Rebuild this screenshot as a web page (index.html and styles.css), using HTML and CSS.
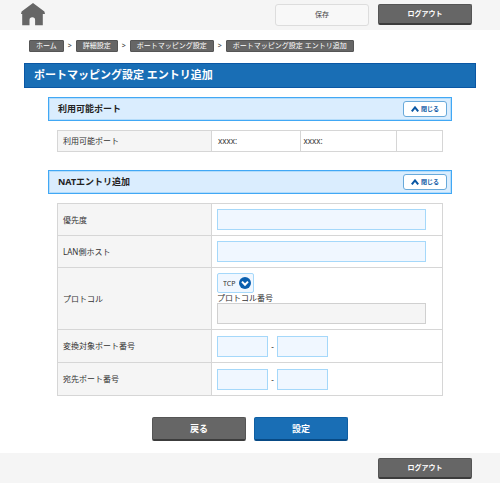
FILE: index.html
```html
<!DOCTYPE html>
<html lang="ja">
<head>
<meta charset="utf-8">
<meta name="viewport" content="width=device-width, initial-scale=1">
<title>ポートマッピング設定 エントリ追加</title>
<link rel="stylesheet" href="styles.css">
</head>
<body>
<header class="bar">
  <a class="home" href="#" aria-label="ホーム">
    <svg viewBox="0 0 24 24" width="24" height="24"><path d="M12 1 .6 9.4 0 12h1.2v11.3h7.3V18a2.8 2.8 0 0 1 5.6 0v5.3h7.7V12H24l-.6-2.6L12 1Z"/></svg>
  </a>
  <button class="btn save" type="button">保存</button>
  <button class="btn logout" type="button">ログアウト</button>
</header>

<nav class="crumbs">
  <a href="#">ホーム</a><span>&gt;</span>
  <a href="#">詳細設定</a><span>&gt;</span>
  <a href="#">ポートマッピング設定</a><span>&gt;</span>
  <a href="#">ポートマッピング設定 エントリ追加</a>
</nav>

<main>
  <h1>ポートマッピング設定 エントリ追加</h1>

  <section class="panel">
    <div class="panel-head">
      <h2>利用可能ポート</h2>
      <button class="toggle" type="button"><svg viewBox="0 0 8 6" width="8" height="6"><path d="M.8 5.4 4 1.4l3.2 4"/></svg>閉じる</button>
    </div>
    <table class="ports">
      <colgroup><col class="c-label"><col class="c-first"><col class="c-second"><col></colgroup>
      <tr><th scope="row">利用可能ポート</th><td>xxxx:</td><td>xxxx:</td><td></td></tr>
    </table>
  </section>

  <section class="panel">
    <div class="panel-head">
      <h2>NATエントリ追加</h2>
      <button class="toggle" type="button"><svg viewBox="0 0 8 6" width="8" height="6"><path d="M.8 5.4 4 1.4l3.2 4"/></svg>閉じる</button>
    </div>
    <form id="entry">
      <table class="fields">
        <colgroup><col class="c-label"><col></colgroup>
        <tr><th scope="row"><label for="priority">優先度</label></th><td><input id="priority" type="text"></td></tr>
        <tr><th scope="row"><label for="host">LAN側ホスト</label></th><td><input id="host" type="text"></td></tr>
        <tr>
          <th scope="row"><label for="protocol">プロトコル</label></th>
          <td>
            <div class="select">
              <select id="protocol"><option>TCP</option><option>UDP</option></select>
              <svg viewBox="0 0 12 12" width="12" height="12"><circle cx="6" cy="6" r="6"/><path d="M3 4.6 6 7.8l3-3.2"/></svg>
            </div>
            <label class="sub" for="number">プロトコル番号</label>
            <input id="number" type="text" disabled>
          </td>
        </tr>
        <tr><th scope="row"><label for="target">変換対象ポート番号</label></th><td class="range-cell"><div class="range"><input id="target" type="text"><span>-</span><input type="text" aria-label="変換対象ポート番号 終了"></div></td></tr>
        <tr><th scope="row"><label for="dest">宛先ポート番号</label></th><td class="range-cell"><div class="range"><input id="dest" type="text"><span>-</span><input type="text" aria-label="宛先ポート番号 終了"></div></td></tr>
      </table>
    </form>
  </section>

  <div class="actions">
    <button class="btn back" type="button">戻る</button>
    <button class="btn apply" type="submit" form="entry">設定</button>
  </div>
</main>

<footer class="bar">
  <button class="btn logout" type="button">ログアウト</button>
</footer>
</body>
</html>
```
FILE: styles.css
```css
* {
  box-sizing: border-box;
}

body {
  margin: 0;
  background: #fff;
  color: #333;
  font: 8px/12px "Noto Sans", "Noto Sans CJK JP", sans-serif;
}

button,
input,
select {
  margin: 0;
  font-family: inherit;
}

.bar {
  display: flex;
  align-items: flex-start;
  justify-content: flex-end;
  gap: 9px;
  padding: 4px 28px 4px 21px;
  background: #f5f5f5;
}

footer.bar {
  padding-top: 5px;
}

.home {
  height: 22px;
  margin: -2px auto 0 0;
}

.home svg {
  display: block;
  fill: #666;
}

.btn {
  width: 94px;
  height: 21px;
  padding: 0;
  border: 1px solid #555;
  border-bottom: 2px solid #3c3c3c;
  border-radius: 2px;
  background: #666;
  color: #fff;
  font-size: 7px;
  font-weight: 700;
  line-height: 16px;
}

.btn.save {
  height: 22px;
  border: 1px solid #ddd;
  border-radius: 3px;
  background: #f8f8f8;
  color: #444;
  font-weight: 400;
}

.crumbs {
  display: flex;
  gap: 4px;
  padding: 10px 24px 11px 29px;
  font-size: 7px;
}

.crumbs a {
  padding: 0 6px;
  border: 1px solid #555;
  border-radius: 1px;
  background: #666;
  color: #fff;
  line-height: 10px;
  text-decoration: none;
}

main {
  padding: 0 24px 12px;
}

h1 {
  margin: 0 0 9px;
  padding: 0 9px 1px;
  border: 1px solid #0a57a4;
  background: #196eb5;
  color: #fff;
  font-size: 11px;
  line-height: 22px;
}

.panel {
  margin: 0 24px 18px;
}

.panel-head {
  display: flex;
  align-items: center;
  justify-content: space-between;
  height: 24px;
  padding: 0 4px 0 9px;
  border: 1px solid #41a8f5;
  outline: 1px solid #b4dcfa;
  outline-offset: -2px;
  background: #daedfe;
}

h2 {
  margin: 0;
  color: #222;
  font-size: 9px;
  line-height: 20px;
}

.toggle {
  display: flex;
  align-items: center;
  justify-content: center;
  gap: 2px;
  width: 44px;
  height: 16px;
  padding: 0;
  border: 1px solid #68a9da;
  border-radius: 3px;
  background: #fff;
  color: #0a57a4;
  font-size: 6px;
  font-weight: 700;
  line-height: 12px;
}

.toggle svg {
  fill: none;
  stroke: #0a57a4;
  stroke-width: 2;
}

table {
  width: calc(100% - 18px);
  margin: 9px 9px 0;
  border-collapse: collapse;
  table-layout: fixed;
}

th,
td {
  padding: 5px;
  border: 1px solid #d6d6d6;
  font-weight: 400;
  text-align: left;
}

th {
  background: #f5f5f5;
}

.c-label {
  width: 40%;
}

.c-first {
  width: 23%;
}

.c-second {
  width: 25%;
}

.ports th,
.ports td {
  padding: 4px 5px;
}

.ports td {
  padding-left: 6px;
}

.ports td + td {
  padding-left: 3px;
}

.fields td.range-cell {
  padding: 6px 5px 5px;
}

.fields input {
  display: block;
  width: 95%;
  height: 21px;
  padding: 0 4px;
  border: 1px solid #a5d8fa;
  border-radius: 0;
  background: #f0f7ff;
  font-size: 8px;
}

.fields input:disabled {
  border-color: #d0d0d0;
  background: #f5f5f5;
}

.select {
  position: relative;
  width: 37px;
  height: 20px;
}

.select select {
  width: 100%;
  height: 100%;
  padding: 0 0 0 5px;
  border: 1px solid #a5d8fa;
  border-radius: 2px;
  appearance: none;
  background: #f0f7ff;
  color: #333;
  font-size: 7px;
}

.select svg {
  position: absolute;
  top: 4px;
  right: 3px;
  fill: #0a5faf;
  pointer-events: none;
}

.select path {
  fill: none;
  stroke: #fff;
  stroke-width: 2;
}

.sub {
  display: block;
  line-height: 10px;
}

.fields .range input {
  width: 51px;
}

.range {
  display: flex;
  align-items: center;
}

.range span {
  width: 9px;
  text-align: center;
}

.actions {
  display: flex;
  justify-content: center;
  gap: 8px;
  padding-top: 3px;
}

.actions .btn {
  height: 24px;
  font-size: 9px;
  line-height: 20px;
}

.btn.apply {
  border-color: #0f5fa3 #0f5fa3 #084a85;
  background: #196eb5;
}
```
